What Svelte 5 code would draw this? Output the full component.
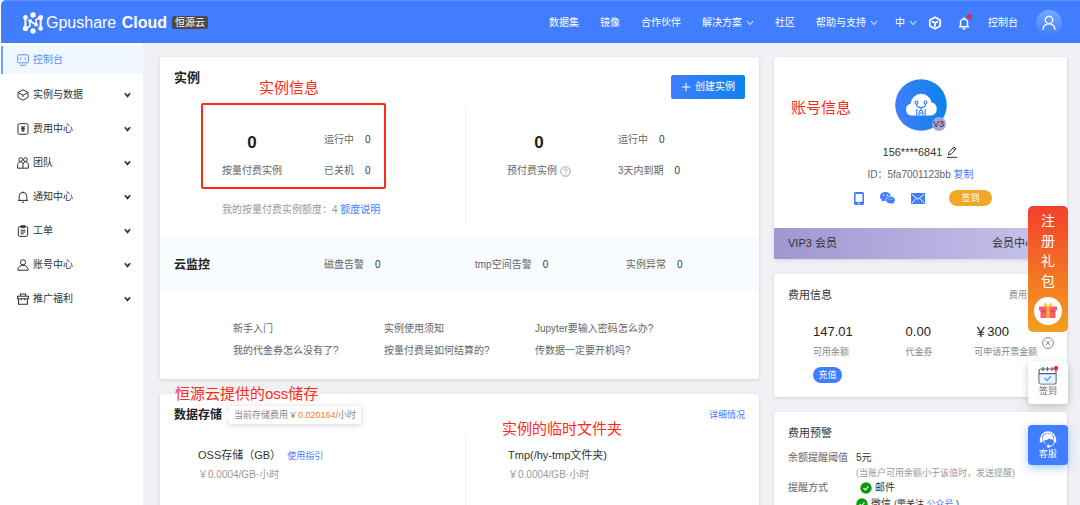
<script>
  const menu = [
    { icon: 'console', label: '控制台', active: true },
    { icon: 'cube', label: '实例与数据' },
    { icon: 'bill', label: '费用中心' },
    { icon: 'team', label: '团队' },
    { icon: 'bell', label: '通知中心' },
    { icon: 'order', label: '工单' },
    { icon: 'user', label: '账号中心' },
    { icon: 'gift', label: '推广福利' },
  ];
  const links = [
    { label: '数据集' },
    { label: '镜像' },
    { label: '合作伙伴' },
    { label: '解决方案', more: true },
    { label: '社区' },
    { label: '帮助与支持', more: true },
  ];
  const monitors = ['磁盘告警', 'tmp空间告警', '实例异常'];
  const faqs = [
    '新手入门', '实例使用须知', 'Jupyter要输入密码怎么办?',
    '我的代金券怎么没有了?', '按量付费是如何结算的?', '传数据一定要开机吗?',
  ];
</script>

{#snippet chevron()}
  <svg class="chev" viewBox="0 0 8 6" width="8" height="6"><path d="M1 1l3 3.6L7 1" /></svg>
{/snippet}

{#snippet check()}
  <svg viewBox="0 0 12 12" width="12" height="12"><circle cx="6" cy="6" r="5.7" fill="#0a9a0a" /><path d="M3.6 6.1l1.8 1.8 3.1-3.5" fill="none" stroke="#fff" stroke-width="1.2" /></svg>
{/snippet}

<div class="app">
  <header>
    <a class="brand" href="#home">
      <svg viewBox="0 0 22 22" width="22" height="22" fill="#fff" stroke="#fff">
        <g stroke="none">
          <circle cx="11" cy="3" r="2.7" /><circle cx="11" cy="19" r="2.7" />
          <circle cx="3.4" cy="5.4" r="2.3" /><circle cx="3.400" cy="16.400" r="2.600" />
          <circle cx="18.600" cy="5.400" r="2.500" /><circle cx="18.600" cy="16.400" r="2.300" />
          <circle cx="8" cy="8.800" r="1.900" /><circle cx="14" cy="12.600" r="1.900" />
        </g>
        <path d="M3.400 5.400v11M18.600 5.400v11" stroke-width="2" fill="none" />
        <path d="M3.600 16.400L7.800 14.400 8 9l6 3.800.2-5.400 4.400-2" stroke-width="1.600" fill="none" />
      </svg>
      <span class="name">Gpushare <b>Cloud</b></span>
      <span class="tag">恒源云</span>
    </a>
    <nav class="links">
      {#each links as l}
        <a href="#nav">{l.label}{#if l.more}{@render chevron()}{/if}</a>
      {/each}
    </nav>
    <div class="tools">
      <button class="plain" aria-label="语言">中{@render chevron()}</button>
      <button class="plain" aria-label="应用">
        <svg viewBox="0 0 14 14" width="14" height="14" fill="none" stroke="#fff" stroke-width="1.7" stroke-linejoin="round"><path d="M7 1.2l5.2 2.8v6L7 12.8 1.8 10V4z" /><path d="M3.8 5.2L7 7l3.2-1.8M7 7v3.8" /></svg>
      </button>
      <button class="plain bell" aria-label="消息">
        <svg viewBox="0 0 12 14" width="12" height="14" fill="none" stroke="#fff" stroke-width="1.5"><path d="M1 10.8h10M2.5 10.8V6.4a3.5 3.5 0 017 0v4.4M6 2.8V1.2" /><path d="M4.600 12.800h2.800" /></svg>
        <i></i>
      </button>
      <a class="console" href="#console">控制台</a>
      <button class="plain avatar" aria-label="用户">
        <svg viewBox="0 0 16 16" width="16" height="16" fill="none" stroke="#fff" stroke-width="1.300" stroke-linecap="round"><circle cx="8" cy="5" r="3.700" /><path d="M2 14.400c.3-3.400 2.400-5.600 6-5.600s5.700 2.200 6 5.600" /></svg>
      </button>
    </div>
  </header>

  <div class="body">
    <nav class="side">
      {#each menu as m}
        <a href="#menu" class:active={m.active}>
          <svg class="mi" viewBox="0 0 12 12" width="12" height="12">
            {#if m.icon === 'console'}
              <rect x=".6" y=".8" width="10.800" height="8" rx="1" /><path d="M4.400 3.400L3 4.800l1.400 1.400M7.600 3.400L9 4.800 7.600 6.200M3 11.200h6" />
            {:else if m.icon === 'cube'}
              <path d="M6 .8l5 2.600v5L6 11.200 1 8.400v-5zM1 3.400l5 2.800 5-2.800M6 6.200v1.800" />
            {:else if m.icon === 'bill'}
              <rect x="1" y=".7" width="10" height="10.600" rx="1.400" /><path d="M4.400 3l1.600 2 1.600-2M4.200 5.400h3.600M4.200 7.200h3.600M6 5v4" stroke-width="1.200" />
            {:else if m.icon === 'team'}
              <circle cx="3.600" cy="2.600" r="1.900" /><circle cx="8.400" cy="2.600" r="1.900" /><path d="M.7 11.200V7.400c0-1.600 1-2.400 2.700-2.400S6 5.800 6 7.400v3.800zM6 11.200h5.300V7.400C11.300 5.800 10.300 5 8.600 5S6 5.800 6 7.400" />
            {:else if m.icon === 'bell'}
              <path d="M.8 9.400h10.400M2.200 9.400V5.200a3.800 3.800 0 017.600 0v4.200M5 11.200h2M6 1.400V.5" />
            {:else if m.icon === 'order'}
              <rect x="1.300" y="1.600" width="9.400" height="9.800" rx="1.400" /><path d="M4 .7h4v1.900H4zM3.600 5.200h4.800M3.600 7h4.800M3.600 8.800h3" />
            {:else if m.icon === 'user'}
              <circle cx="6" cy="3.300" r="2.600" /><path d="M.9 11.200c0-2.800 1.300-4 3.300-4.600h3.600c2 .6 3.300 1.800 3.300 4.600z" />
            {:else}
              <path d="M.6 3.200h10.800v2.600H.6zM1.600 5.800v5.400h8.800V5.800M3.400 3V1h5.200v2M4.400 5.400v1.800M7.600 5.400v1.800" stroke-width="1.100" />
            {/if}
          </svg>
          <span>{m.label}</span>
          {#if !m.active}{@render chevron()}{/if}
        </a>
      {/each}
    </nav>

    <main>
      <div class="col">
        <section class="card">
          <div class="head">
            <h2>实例</h2>
            <button class="create"><svg viewBox="0 0 10 10" width="10" height="10"><path d="M5 .8v8.400M.8 5h8.400" stroke="#fff" /></svg>创建实例</button>
          </div>
          <div class="stats">
            <div class="stat first">
              <div class="grid">
                <strong>0</strong><p>运行中<b>0</b></p>
                <p>按量付费实例</p><p>已关机<b>0</b></p>
              </div>
              <p class="quota">我的按量付费实例额度：4 <a href="#quota">额度说明</a></p>
            </div>
            <div class="stat second">
              <div class="grid">
                <strong>0</strong><p>运行中<b>0</b></p>
                <p class="q">预付费实例<svg viewBox="0 0 12 12" width="11" height="11" fill="none" stroke="#999"><circle cx="6" cy="6" r="5.200" /><path d="M4.400 4.800c0-2.200 3.200-2.200 3.200-.2 0 1-1.600 1.200-1.600 2.400M6 8.200v1" /></svg></p>
                <p>3天内到期<b>0</b></p>
              </div>
            </div>
          </div>
          <div class="monitor">
            <h3>云监控</h3>
            {#each monitors as m}<p>{m}<b>0</b></p>{/each}
          </div>
          <div class="faq">
            {#each faqs as f}<a href="#faq">{f}</a>{/each}
          </div>
          <div class="frame"></div>
          <span class="note n1">实例信息</span>
        </section>

        <section class="card storage">
          <div class="shead">
            <h3>数据存储</h3>
            <span class="pop">当前存储费用 ¥ <em>0.020164</em>/小时</span>
            <a href="#detail">详细情况</a>
          </div>
          <div class="stores">
            <div>
              <h4>OSS存储（GB）<a href="#guide">使用指引</a></h4>
              <p>￥0.0004/GB·小时</p>
            </div>
            <div>
              <h4>Tmp(/hy-tmp文件夹)</h4>
              <p>￥0.0004/GB·小时</p>
            </div>
          </div>
          <span class="note n2">恒源云提供的oss储存</span>
          <span class="note n3">实例的临时文件夹</span>
        </section>
      </div>

      <div class="col">
        <section class="card account">
          <div class="face">
            <svg viewBox="0 0 52 52" width="52" height="52">
              <defs><linearGradient id="fg"><stop offset="0" stop-color="#417dff" /><stop offset="1" stop-color="#0a84ea" /></linearGradient></defs>
              <circle cx="26" cy="26" r="25.800" fill="url(#fg)" />
              <path d="M17 36.500a6 6 0 01-1.500-11.800 10.600 10.600 0 0121-1.200A6.600 6.600 0 0136 36.500z" fill="#fff" />
              <g fill="none" stroke="#2a7cf5" stroke-width="1.100"><circle cx="21.500" cy="23.500" r="1.500" /><circle cx="30.500" cy="23.500" r="1.500" /><path d="M21.500 25c0 3 2 3.600 4.500 3.600s4.500-.6 4.500-3.600M21.800 36.500V30M30.200 36.500V30M26 28.600v2.600M24 36.500v-3M28 36.500v-3" /><circle cx="26" cy="32.800" r="1.500" /></g>
            </svg>
            <span class="lv">V3</span>
          </div>
          <p class="phone">156****6841
            <svg viewBox="0 0 12 12" width="12" height="12" fill="none" stroke="#333"><path d="M.8 11.300h10.600M2.400 9l.6-2.800L8 1l2 1.800-5 5.400zM6.800 2.400l2 1.800" /></svg>
          </p>
          <p class="uid">ID：5fa7001123bb <a href="#copy">复制</a></p>
          <div class="binds">
            <svg viewBox="0 0 10 13" width="10" height="13"><rect width="10" height="13" rx="1.500" fill="#417dff" /><path d="M1.600 2h6.800v7.800H1.600z" fill="#fff" /><circle cx="5" cy="11.400" r=".8" fill="#fff" /></svg>
            <svg viewBox="0 0 15 12" width="15" height="12"><path d="M5.600 0C2.400 0 0 2 0 4.500c0 1.500.8 2.700 2 3.500l-.5 1.700 2-1c.7.200 1.300.3 2 .3C5.400 5.800 7.800 3.800 10.900 3.700 10.300 1.500 8.200 0 5.600 0z" fill="#417dff" /><path d="M10.600 4.400c-2.600 0-4.500 1.600-4.500 3.600s2 3.600 4.500 3.600c.5 0 1-.1 1.500-.2l1.600.8-.4-1.400c1-.7 1.700-1.600 1.700-2.800 0-2-2-3.600-4.400-3.600z" fill="#417dff" /><g fill="#fff"><circle cx="3.700" cy="3.200" r=".8" /><circle cx="7.400" cy="3.200" r=".8" /><circle cx="9.200" cy="7" r=".6" /><circle cx="12" cy="7" r=".6" /></g></svg>
            <svg viewBox="0 0 14 11" width="14" height="11"><rect width="14" height="11" rx="1" fill="#417dff" /><path d="M1 1.500l6 4.800 6-4.800M1 10l4.200-4.600M13 10L8.800 5.400" fill="none" stroke="#fff" /></svg>
            <button class="sign">签到</button>
          </div>
          <div class="vip"><span>VIP3 会员</span><a href="#vip">会员中心</a></div>
          <span class="note n4">账号信息</span>
        </section>

        <section class="card fee">
          <div class="fhead"><h4>费用信息</h4><a href="#fee">费用中心</a></div>
          <div class="sums">
            <div><strong>147.01</strong><span>可用余额</span><button class="pay">充值</button></div>
            <div><strong>0.00</strong><span>代金券</span></div>
            <div><strong>￥300</strong><span>可申请开票金额</span></div>
          </div>
        </section>

        <section class="card warn">
          <h4>费用预警</h4>
          <dl>
            <dt>余额提醒阈值</dt>
            <dd>5元<small>(当账户可用余额小于该值时，发送提醒)</small></dd>
            <dt>提醒方式</dt>
            <dd>
              <div class="way mail">{@render check()}邮件</div>
              <div class="way">{@render check()}微信 <small>(需关注 <a href="#mp">公众号</a> )</small></div>
            </dd>
          </dl>
        </section>
      </div>
    </main>
  </div>

  <aside>
    <a class="pack" href="#gift">
      <span>注</span><span>册</span><span>礼</span><span>包</span>
      <svg viewBox="0 0 28 28" width="28" height="28">
        <circle cx="14" cy="14" r="14" fill="#fff" />
        <path d="M5 9.500h18v4H5zM6.500 13.500h15V21h-15z" fill="#ff5a6e" /><path d="M6.500 13.500h15v1.300h-15z" fill="#e8455c" />
        <path d="M12.400 9.500h3.200V21h-3.200z" fill="#ffb833" />
        <path d="M14 9.500C9.500 9.800 8.600 8 9.800 6.600c1.400-1.300 3.300 0 4.200 2.900.9-2.900 2.800-4.200 4.200-2.900 1.200 1.400.3 3.200-4.200 2.900z" fill="#ffc83c" />
      </svg>
    </a>
    <button class="plain close" aria-label="关闭"><svg viewBox="0 0 12 12" width="12" height="12" fill="none" stroke="#888"><circle cx="6" cy="6" r="5.400" /><path d="M3.800 3.800l4.400 4.400M8.200 3.800L3.800 8.200" /></svg></button>
    <button class="box">
      <svg viewBox="0 0 20 19" width="20" height="19"><rect x="1" y="3" width="17" height="15" rx="2" fill="#fff" stroke="#566070" stroke-width="1.200" /><path d="M1.600 8h15.800v9.400H1.600z" fill="#e4f3ff" /><path d="M1 7.600h17M5 1v4M9.500 1v4M14 1v4" stroke="#566070" stroke-width="1.200" /><path d="M6.500 12l2.400 2.400 4-4.200" fill="none" stroke="#54aef5" stroke-width="1.500" /><circle cx="18" cy="2.200" r="2.200" fill="#f5222d" /></svg>
      签到
    </button>
    <button class="box blue">
      <svg viewBox="0 0 18 17" width="18" height="17"><path d="M2 8a7 7 0 0114 0" fill="none" stroke="#fff" stroke-width="1.400" /><rect x=".8" y="6.500" width="2.600" height="5" rx="1.200" fill="#fff" /><rect x="14.600" y="6.500" width="2.600" height="5" rx="1.200" fill="#fff" /><path d="M3.800 9.500C3.200 4.600 5.600 2.400 9 2.400s5.600 2 5.200 6c-.6.200-1.100.2-1.600.1-.8 3.400-3 4.900-5 4.700C5.600 13 4.200 11.600 3.800 9.500z" fill="#fff" /><path d="M4.500 9.400c2.600 0 4.700-.7 6-2.200.6.900 1.400 1.400 2.600 1.600-.7 2.900-2.400 4.200-4.300 4.200-2.100 0-3.700-1.200-4.300-3.600z" fill="#417dff" /><path d="M15.500 11.500c-.8 2.400-2.600 3.700-5.500 3.900" fill="none" stroke="#fff" /><circle cx="9.500" cy="15.300" r="1.500" fill="#fff" /></svg>
      客服
    </button>
  </aside>
</div>

<style>
  :global(body) { margin: 0; background: #fff; }
  .app {
    display: flex; flex-direction: column; height: 100vh; overflow: hidden; padding-left: 1px; box-sizing: border-box;
    font: 10px/20px "Liberation Sans", "Noto Sans CJK SC", sans-serif; color: #666;
  }
  h2, h3, h4, p, dl, dd { margin: 0; }
  a { color: #417dff; text-decoration: none; }
  svg { flex: none; display: block; }
  button { font: inherit; border: 0; padding: 0; cursor: pointer; }
  .plain { background: none; color: inherit; display: flex; align-items: center; }
  .chev { fill: none; stroke: currentColor; }

  header {
    display: flex; align-items: center; height: 43px; flex: none; box-sizing: border-box; padding: 1px 18px 0 21px;
    background: #417dff; color: #fff; border-top: 1px solid #5c90ff; border-top-left-radius: 5px;
  }
  header a { color: #fff; display: flex; align-items: center; }
  header .chev { margin-left: 4px; }
  .brand { gap: 2px; }
  .name { font-size: 16px; white-space: nowrap; }
  .name b { margin-left: 1px; }
  .tag { background: #4a4a4c; border-radius: 2px; padding: 0 3px; line-height: 13px; margin-left: 3px; white-space: nowrap; }
  .links { display: flex; gap: 21px; margin-left: auto; white-space: nowrap; }
  .tools { display: flex; align-items: center; gap: 18px; margin-left: 17px; }
  .tools > :nth-child(2) { margin-left: -7px; }
  .tools > :nth-child(3) { margin-left: -2px; }
  .bell { position: relative; }
  .bell i { position: absolute; right: -2px; top: -2px; width: 5px; height: 5px; border-radius: 50%; background: #f5222d; }
  .avatar { width: 26px; height: 26px; border-radius: 50%; justify-content: center; background: linear-gradient(#74a9ff, #417dff); }

  .body { display: flex; flex: 1; min-height: 0; background: #f0f1f5; }
  .side { width: 142px; flex: none; background: #fff; padding-top: 3px; }
  .side a { display: flex; align-items: center; height: 28px; margin-bottom: 6px; padding: 0 12px 0 14px; gap: 4px; color: #333; border-left: 2px solid transparent; }
  .side a.active { color: #5b90ff; background: #eff7ff; border-color: #6ba0ff; margin-bottom: 7px; }
  .side .chev { margin-left: auto; width: 7px; stroke-width: 2; }
  .mi { fill: none; stroke: currentColor; }

  main {
    flex: 1; min-width: 0; display: grid; grid-template-columns: minmax(0, 599fr) minmax(0, 293fr); gap: 15px;
    padding: 14px 13px 0 17px; overflow: auto; scrollbar-width: none; align-items: start;
  }
  .col { display: flex; flex-direction: column; gap: 15px; min-width: 0; }
  .card { position: relative; background: #fff; border-radius: 3px; box-shadow: 0 1px 4px rgba(0, 0, 0, .12); }
  h2 { font-size: 13px; line-height: 20px; color: #222; }
  h3 { font-size: 12px; line-height: 20px; color: #222; }
  h4 { font-size: 11px; line-height: 20px; color: #333; font-weight: 400; }

  .head { display: flex; justify-content: space-between; align-items: flex-start; padding: 11px 14px 0; }
  .create {
    display: flex; align-items: center; gap: 4px; height: 24px; padding: 0 10px; margin-top: 7px; color: #fff; border-radius: 2px;
    background: linear-gradient(90deg, #417dff, #0a84ea);
  }
  .stats { display: grid; grid-template-columns: 306fr 293fr; padding: 6px 0 14px; }
  .stat { padding-top: 25px; box-sizing: border-box; height: 119px; white-space: nowrap; }
  .first { padding-left: 62px; border-right: 1px solid #f0f0f2; }
  .second { padding-left: 41px; }
  .grid { display: grid; grid-template-columns: auto 1fr; grid-template-rows: 24px 20px; row-gap: 7px; column-gap: 42px; }
  .second .grid { column-gap: 47px; }
  .grid strong { font-size: 17px; line-height: 26px; text-align: center; color: #222; }
  p b { font-weight: 400; color: #333; margin-left: 11px; }
  .q { display: flex; align-items: center; gap: 3px; }
  .quota { margin-top: 19px; color: #999; }
  .monitor { display: grid; grid-template-columns: 150fr 151fr 151fr 133fr; align-items: center; height: 54px; padding-left: 14px; background: #f8fcff; white-space: nowrap; }
  .faq { display: grid; grid-template-columns: 151fr 151fr 224fr; padding: 26px 0 17px 73px; line-height: 22px; white-space: nowrap; }
  .faq a { color: #666; }
  .frame { position: absolute; left: 41px; top: 46px; width: 181px; height: 82px; border: 2px solid #ff2a1a; border-radius: 2px; }
  .note { position: absolute; font-size: 15px; line-height: 20px; color: #ff2a1a; white-space: nowrap; }
  .n1 { left: 99px; top: 21px; }
  .n2 { left: 15px; top: -10px; }
  .n3 { left: 342px; top: 25px; }
  .n4 { left: 17px; top: 41px; }

  .shead { display: flex; align-items: center; padding: 11px 14px 0; font-size: 9px; white-space: nowrap; }
  .shead a { margin-left: auto; }
  .pop { position: relative; margin-left: 7px; padding: 0 5px; line-height: 18px; color: #888; background: #fff; border-radius: 2px; box-shadow: 0 1px 6px rgba(0, 0, 0, .18); }
  .pop::before { content: ""; position: absolute; left: -3px; top: 6px; width: 6px; height: 6px; background: #fff; transform: rotate(45deg); }
  em { font-style: normal; color: #ff7a1a; }
  .stores { display: grid; grid-template-columns: 306fr 293fr; margin-top: 10px; min-height: 110px; }
  .stores > div { padding: 10px 0 0 38px; }
  .stores > div:first-child { border-right: 1px solid #f0f0f2; }
  .stores > div + div { padding-left: 42px; }
  .stores h4 a { font-size: 9px; line-height: 10px; margin-left: 6px; }
  .stores p { color: #999; }

  .account { display: flex; flex-direction: column; align-items: center; padding-top: 22px; }
  .face { position: relative; }
  .lv { position: absolute; right: 1px; bottom: 0; width: 14px; height: 14px; border-radius: 50%; background: #a9a2d8; color: #333; font-size: 9px; line-height: 14px; text-align: center; }
  .phone { display: flex; align-items: center; gap: 4px; font-size: 11px; color: #333; margin-top: 11px; }
  .uid { margin-top: 3px; }
  .binds { display: flex; align-items: center; gap: 16px; margin-top: 5px; padding-left: 5px; }
  .sign { margin-left: 8px; width: 43px; height: 16px; border-radius: 8px; background: #f0a829; color: #fff; font-size: 9px; line-height: 16px; }
  .vip { align-self: stretch; display: flex; justify-content: space-between; margin-top: 22px; padding: 0 31px 0 14px; line-height: 31px; font-size: 11px; color: #333; background: linear-gradient(90deg, #9f97d0, #c9c6ec); }
  .vip a { color: #333; }

  .fee { padding: 11px 14px 14px; }
  .fhead { display: flex; justify-content: space-between; font-size: 9px; }
  .fhead a { color: #888; margin-right: 8px; }
  .sums { display: grid; grid-template-columns: 93fr 69fr 79fr; padding: 17px 0 0 25px; white-space: nowrap; }
  .sums > div { display: flex; flex-direction: column; align-items: flex-start; font-size: 9px; color: #888; }
  .sums strong { font-size: 13px; font-weight: 400; color: #222; }
  .pay { width: 29px; height: 16px; margin-top: 5px; border-radius: 8px; background: #417dff; color: #fff; line-height: 16px; }

  .warn { padding: 11px 14px 14px; white-space: nowrap; }
  dl { display: grid; grid-template-columns: 60px 1fr; column-gap: 8px; margin-top: 5px; }
  dd { color: #333; }
  dd > small { display: block; line-height: 10px; color: #999; }
  small { font-size: 9px; }
  .way { display: flex; align-items: center; gap: 3px; line-height: 16px; }
  .mail { margin: 2px 0 0 4px; }

  aside { position: fixed; right: 12px; top: 206px; width: 40px; display: flex; flex-direction: column; align-items: center; }
  .pack { display: flex; flex-direction: column; align-items: center; align-self: stretch; padding: 5px 0 7px; border-radius: 5px; background: linear-gradient(#f43f2c, #f2a01e); color: #fff; font-size: 14px; line-height: 20px; }
  .pack svg { margin-top: 6px; }
  .close { margin: 5px 0 12px; border-radius: 50%; background: #fff; }
  .box { display: flex; flex-direction: column; align-items: center; align-self: stretch; padding: 5px 0 7px; border-radius: 4px; background: #fff; color: #666; font-size: 9px; line-height: 12px; box-shadow: 0 3px 8px rgba(0, 0, 0, .2); }
  .blue { margin-top: 21px; padding: 6px 0 5px; background: #417dff; color: #fff; box-shadow: 0 3px 10px rgba(65, 160, 255, .5); }
</style>
